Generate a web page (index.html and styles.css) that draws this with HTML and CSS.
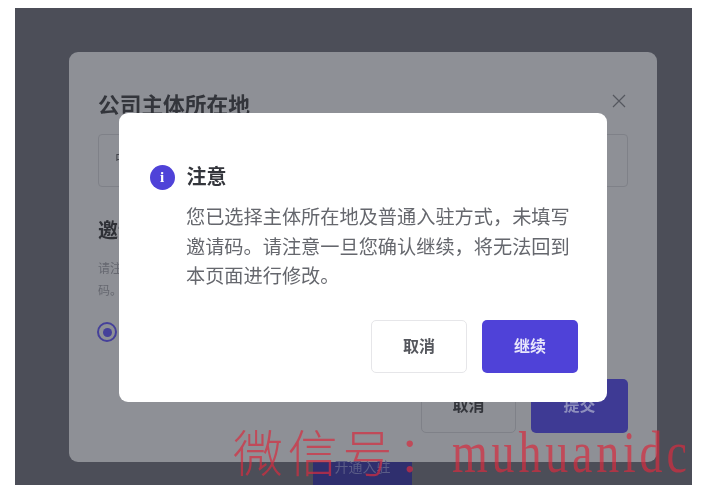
FILE: index.html
```html
<!DOCTYPE html>
<html lang="zh-CN">

<head>
    <meta charset="UTF-8">
    <meta name="viewport" content="width=device-width, initial-scale=1.0">
    <title>注意</title>
    <link rel="stylesheet" href="styles.css">
</head>

<body>

    <div class="screen">

        <!-- 底层表单 -->
        <div class="sheet">
            <div class="sheet-head">
                <h2 class="sheet-title">公司主体所在地</h2>
                <svg class="close-icon" width="14" height="14" viewBox="0 0 14 14">
                    <path d="M1 1 L13 13 M13 1 L1 13" />
                </svg>
            </div>
            <div class="select-box">中国</div>
            <h3 class="section-title">邀请码</h3>
            <p class="hint">请注意填写<br>码。</p>
            <div class="radio"><span class="radio-dot"></span></div>
            <div class="sheet-actions">
                <button type="button" class="sheet-btn">取消</button>
                <button type="button" class="sheet-btn sheet-btn-primary">提交</button>
            </div>
        </div>

        <div class="strip">开通入驻</div>

        <!-- 确认弹窗 -->
        <div class="dialog">
            <div class="dialog-head">
                <span class="info-icon">i</span>
                <h1 class="dialog-title">注意</h1>
            </div>
            <p class="dialog-text">您已选择主体所在地及普通入驻方式，未填写<br>邀请码。请注意一旦您确认继续，将无法回到<br>本页面进行修改。</p>
            <div class="dialog-actions">
                <button type="button" class="dialog-btn">取消</button>
                <button type="button" class="dialog-btn dialog-btn-primary">继续</button>
            </div>
        </div>

        <div class="watermark">微信号：<span class="watermark-latin">muhuanidc</span></div>

    </div>

</body>

</html>
```

FILE: styles.css
```css
* {
    box-sizing: border-box;
}

body {
    margin: 0;
    padding: 8px 13px 6px 15px;
    background-color: #fff;
    font-family: "Inter", "Noto Sans CJK SC", sans-serif;
}

h1,
h2,
h3,
p {
    margin: 0;
}

button {
    font-family: inherit;
    cursor: pointer;
}

.screen {
    position: relative;
    width: 677px;
    height: 477px;
    padding: 44px 0 0 54px;
    overflow: hidden;
    background-color: #4c4e58;
    filter: blur(0.6px);
}

.sheet {
    display: flex;
    flex-direction: column;
    width: 588px;
    height: 410px;
    padding: 38px 29px 29px 29px;
    background-color: #8e9096;
    border-radius: 9px;
}

.sheet-head {
    display: flex;
    justify-content: space-between;
    align-items: flex-start;
}

.sheet-title {
    font-size: 21.7px;
    font-weight: 700;
    line-height: 30px;
    color: #33353b;
}

.close-icon {
    margin: 4px 2px 0 0;
}

.close-icon path {
    fill: none;
    stroke: #55575f;
    stroke-width: 1.2;
}

.select-box {
    height: 53px;
    margin-top: 14px;
    padding: 0 16px;
    line-height: 46px;
    font-size: 14px;
    color: #44464d;
    border: 1px solid #7f8188;
    border-radius: 4px;
}

.section-title {
    margin-top: 29px;
    font-size: 20px;
    font-weight: 700;
    line-height: 30px;
    color: #2e3036;
}

.hint {
    margin-top: 12px;
    font-size: 12px;
    line-height: 22px;
    color: #65676f;
}

.radio {
    display: flex;
    justify-content: center;
    align-items: center;
    width: 20px;
    height: 20px;
    margin: 20px 0 0 -1px;
    border: 2px solid #45409a;
    border-radius: 50%;
}

.radio-dot {
    width: 9px;
    height: 9px;
    background-color: #45409a;
    border-radius: 50%;
}

.sheet-actions {
    display: flex;
    justify-content: flex-end;
    gap: 15px;
    margin-top: auto;
}

.sheet-btn {
    width: 95px;
    height: 54px;
    padding-bottom: 6px;
    font-size: 16px;
    font-weight: 700;
    color: #33353b;
    background-color: transparent;
    border: 1px solid #7f8188;
    border-radius: 5px;
}

.sheet-btn-primary {
    width: 97px;
    color: #8e8fbd;
    background-color: #3e3a94;
    border: none;
}

.strip {
    width: 99px;
    height: 23px;
    margin-left: 244px;
    font-size: 14px;
    line-height: 10px;
    text-align: center;
    color: #5b5d87;
    background-color: #2f2f6e;
}

.dialog {
    position: absolute;
    left: 103.5px;
    top: 105px;
    display: flex;
    flex-direction: column;
    width: 488.5px;
    height: 289px;
    padding: 49px 29px 29px 31px;
    background-color: #fff;
    border-radius: 9px;
}

.dialog-head {
    display: flex;
    align-items: center;
    gap: 12px;
}

.info-icon {
    width: 25px;
    height: 25px;
    font-family: "Liberation Serif", serif;
    font-size: 15px;
    font-weight: 700;
    line-height: 25px;
    text-align: center;
    color: #fff;
    background-color: #4f42d8;
    border-radius: 50%;
}

.dialog-title {
    font-size: 20px;
    font-weight: 700;
    line-height: 30px;
    color: #33353b;
}

.dialog-text {
    margin: 11px 0 0 36.5px;
    font-size: 19.2px;
    line-height: 29.5px;
    white-space: nowrap;
    color: #65676d;
}

.dialog-actions {
    display: flex;
    justify-content: flex-end;
    gap: 15px;
    margin-top: auto;
}

.dialog-btn {
    width: 96px;
    height: 53px;
    padding-bottom: 5px;
    font-size: 16px;
    font-weight: 700;
    color: #55575d;
    background-color: #fff;
    border: 1px solid #e6e6e9;
    border-radius: 5px;
}

.dialog-btn-primary {
    color: #e8e6fb;
    background-color: #4f42d8;
    border: none;
}

.watermark {
    position: absolute;
    left: 218px;
    top: 412px;
    font-family: "Noto Sans CJK SC", sans-serif;
    font-size: 50px;
    font-weight: 300;
    letter-spacing: 4.75px;
    line-height: 60px;
    white-space: nowrap;
    color: rgba(214, 44, 62, 0.7);
}

.watermark-latin {
    display: inline-block;
    font-family: "Liberation Serif", serif;
    font-size: 46px;
    letter-spacing: 3.8px;
    transform: scaleY(1.28);
    transform-origin: 50% 76%;
}
```
